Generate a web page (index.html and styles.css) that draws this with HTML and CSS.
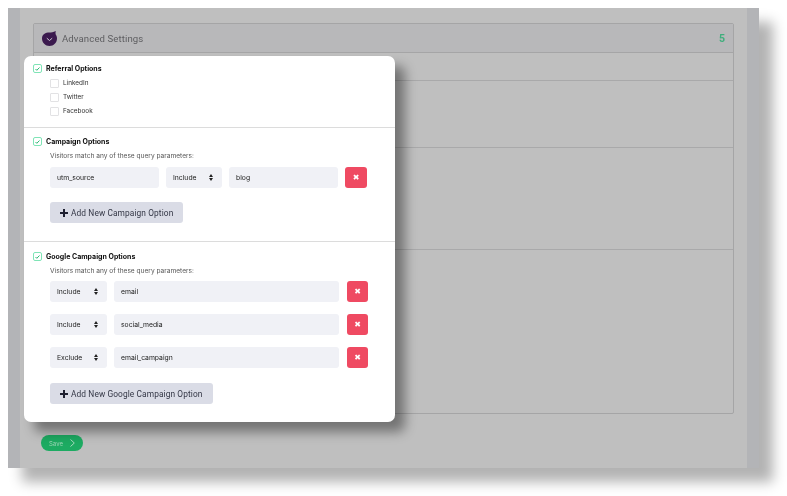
FILE: index.html

```html
<!DOCTYPE html>
<html lang="en">
<head>
    <meta charset="UTF-8">
    <title>Advanced Settings</title>
    <link rel="stylesheet" href="styles.css">
</head>
<body>
    <div class="window">
        <div class="content">
            <div class="panel">
                <div class="panel-head">
                    <svg class="logo" width="15" height="15" viewBox="0 0 15 15">
                        <path d="M7.5 1.5c1.800 0 3.700-.4 6.300-1.500-.3 1.100-.4 2.200-.2 3.300 0.900 1.200 1.400 2.700 1.400 4.200 0 4.100-3.400 7.500-7.500 7.500S0 11.600 0 7.500 3.400 1.500 7.500 1.500z" fill="#3b1a4e"/>
                        <path d="M4.800 7.200l2.700 2.300 2.700-2.300" fill="none" stroke="#c9c3cf" stroke-width="1"/>
                    </svg>
                    <span class="panel-title">Advanced Settings</span>
                    <span class="count">5</span>
                </div>
                <div class="panel-row row-a"></div>
                <div class="panel-row row-b"></div>
                <div class="panel-row row-c"></div>
                <div class="panel-row row-d"></div>
            </div>
            <div class="save"><span>Save</span>
                <svg width="5" height="8" viewBox="0 0 5 8"><path d="M.5.5L4.300 4 .5 7.500" fill="none" stroke="#a5d8bc" stroke-width="1"/></svg>
            </div>
        </div>

        <div class="modal">
            <section class="section referral">
                <div class="section-title">
                    <span class="check"><svg width="5" height="4" viewBox="0 0 5 4"><path d="M.5 2l1.300 1.300L4.500.5" fill="none" stroke="#2bb673" stroke-width="1"/></svg></span>
                    Referral Options
                </div>
                <div class="option"><span class="box"></span>LinkedIn</div>
                <div class="option"><span class="box"></span>Twitter</div>
                <div class="option"><span class="box"></span>Facebook</div>
            </section>

            <section class="section campaign">
                <div class="section-title">
                    <span class="check"><svg width="5" height="4" viewBox="0 0 5 4"><path d="M.5 2l1.300 1.300L4.500.5" fill="none" stroke="#2bb673" stroke-width="1"/></svg></span>
                    Campaign Options
                </div>
                <p class="hint">Visitors match any of these query parameters:</p>
                <div class="field-row">
                    <div class="field w-109">utm_source</div>
                    <div class="field select w-56">Include<span class="sort"></span></div>
                    <div class="field w-109">blog</div>
                    <div class="delete"><span class="x">✖</span></div>
                </div>
                <div class="add"><span class="plus"></span>Add New Campaign Option</div>
            </section>

            <section class="section google">
                <div class="section-title">
                    <span class="check"><svg width="5" height="4" viewBox="0 0 5 4"><path d="M.5 2l1.300 1.300L4.500.5" fill="none" stroke="#2bb673" stroke-width="1"/></svg></span>
                    Google Campaign Options
                </div>
                <p class="hint">Visitors match any of these query parameters:</p>
                <div class="field-row wide">
                    <div class="field select w-57">Include<span class="sort"></span></div>
                    <div class="field grow">email</div>
                    <div class="delete"><span class="x">✖</span></div>
                </div>
                <div class="field-row wide">
                    <div class="field select w-57">Include<span class="sort"></span></div>
                    <div class="field grow">social_media</div>
                    <div class="delete"><span class="x">✖</span></div>
                </div>
                <div class="field-row wide">
                    <div class="field select w-57">Exclude<span class="sort"></span></div>
                    <div class="field grow">email_campaign</div>
                    <div class="delete"><span class="x">✖</span></div>
                </div>
                <div class="add"><span class="plus"></span>Add New Google Campaign Option</div>
            </section>
        </div>
    </div>
</body>
</html>
```

FILE: styles.css

```css
html, body {
    margin: 0;
    height: 100%;
    background: #fff;
    overflow: hidden;
}
body {
    padding: 8px 0 0 8px;
    box-sizing: border-box;
    font-family: 'Inter', 'Roboto', Arial, sans-serif;
    color: #111;
}
/* the whole shot is slightly soft */
.window {
    position: relative;
    width: 751px;
    height: 460px;
    padding: 0 12px;
    box-sizing: border-box;
    background: #b3b4b7;
    box-shadow: 14px 14px 12px rgba(0,0,0,0.3);
    filter: blur(0.35px);
}
.content {
    height: 100%;
    padding: 15px 13px 0;
    box-sizing: border-box;
    background: #bfbfbf;
}
.panel {
    height: 391px;
    border: 1px solid #a5a5a6;
    border-radius: 2px;
    box-sizing: border-box;
    display: flex;
    flex-direction: column;
}
.panel-head {
    height: 29px;
    flex: none;
    display: flex;
    align-items: center;
    padding: 0 8px;
    box-sizing: border-box;
    background: #b8b8ba;
    border-bottom: 1px solid #a5a5a6;
}
.panel-title {
    margin-left: 5px;
    font-family: 'Roboto', Arial, sans-serif;
    font-size: 9.6px;
    letter-spacing: 0.1px;
    color: #5e5e61;
}
.count {
    margin-left: auto;
    font-family: 'Roboto', Arial, sans-serif;
    font-size: 10.5px;
    font-weight: 700;
    color: #3fae7c;
}
.panel-row {
    flex: none;
    border-bottom: 1px solid #a9a9aa;
    box-sizing: border-box;
}
.row-a { height: 28px; }
.row-b { height: 67px; }
.row-c { height: 102px; }
.row-d { flex: 1; border-bottom: 0; }

.save {
    width: 42px;
    height: 16px;
    margin: 21px 0 0 8px;
    display: flex;
    align-items: center;
    gap: 7px;
    padding-left: 8px;
    box-sizing: border-box;
    border-radius: 8px;
    background: #1dab62;
    font-size: 6px;
    color: #9ed6b7;
}

/* modal sits over the dimmed page */
.modal {
    position: absolute;
    left: 16px;
    top: 48px;
    width: 371px;
    height: 366px;
    background: #fff;
    border-radius: 7px;
    box-shadow: 10px 10px 12px rgba(0,0,0,0.4);
    overflow: hidden;
}
.section {
    box-sizing: border-box;
    padding-left: 9px;
    border-bottom: 1px solid #dcdcdc;
}
.referral { height: 72px; padding-top: 8px; }
.campaign { height: 114px; padding-top: 9px; }
.google { height: 180px; padding-top: 10px; border-bottom: 0; }

.section-title {
    display: flex;
    align-items: center;
    gap: 4px;
    height: 9px;
    font-size: 7px;
    font-weight: 700;
    color: #0c0c0c;
}
.check {
    width: 9px;
    height: 9px;
    display: flex;
    align-items: center;
    justify-content: center;
    flex: none;
    box-sizing: border-box;
    border: 1px solid #7fe4b6;
    border-radius: 2px;
}
.option {
    display: flex;
    align-items: center;
    gap: 4px;
    height: 14px;
    margin-left: 17px;
    font-size: 6.4px;
    color: #333;
}
.section-title + .option { margin-top: 3px; }
.box {
    width: 7px;
    height: 7px;
    border: 1px solid #e2e2e4;
    border-radius: 1px;
}
.hint {
    margin: 6px 0 0 17px;
    height: 9px;
    line-height: 9px;
    font-size: 6.6px;
    color: #555;
}
.field-row {
    display: flex;
    gap: 7px;
    margin: 6px 0 0 17px;
}
.wide { margin-top: 0; margin-bottom: 12px; }
.hint + .wide { margin-top: 5px; }
.field {
    height: 21px;
    display: flex;
    align-items: center;
    padding-left: 7px;
    box-sizing: border-box;
    background: #f0f1f6;
    border-radius: 3px;
    font-size: 6.8px;
    color: #222;
}
.w-109 { width: 109px; }
.w-57 { width: 57px; }
.w-56 { width: 56px; }
.grow { width: 225px; }
.select { position: relative; }
.sort {
    position: absolute;
    right: 9px;
    top: 4px;
    width: 0;
    height: 0;
    border-left: 2.5px solid transparent;
    border-right: 2.5px solid transparent;
    border-top: 3px solid transparent;
    border-bottom: 3px solid #222;
}
.sort::after {
    content: "";
    position: absolute;
    left: -2.5px;
    top: 4px;
    border-left: 2.5px solid transparent;
    border-right: 2.5px solid transparent;
    border-top: 3px solid #222;
}
.delete {
    width: 22px;
    height: 21px;
    display: flex;
    align-items: center;
    justify-content: center;
    background: #ef4a62;
    border-radius: 3px;
    color: #fff;
}
.wide .delete { width: 21px; margin-left: 1px; }
.x { font-family: 'DejaVu Sans', sans-serif; font-size: 8px; line-height: 1; }
.add {
    display: inline-flex;
    align-items: center;
    gap: 3px;
    height: 21px;
    margin: 14px 0 0 17px;
    padding: 0 10px;
    box-sizing: border-box;
    background: #dadce6;
    border-radius: 3px;
    font-family: 'Roboto', Arial, sans-serif;
    font-size: 8.35px;
    letter-spacing: 0.1px;
    color: #333645;
}
.wide + .add { margin-top: 3px; }
.plus {
    width: 8px;
    height: 8px;
    background:
        linear-gradient(#1e2030, #1e2030) center / 8px 2px no-repeat,
        linear-gradient(#1e2030, #1e2030) center / 2px 8px no-repeat;
}
```
